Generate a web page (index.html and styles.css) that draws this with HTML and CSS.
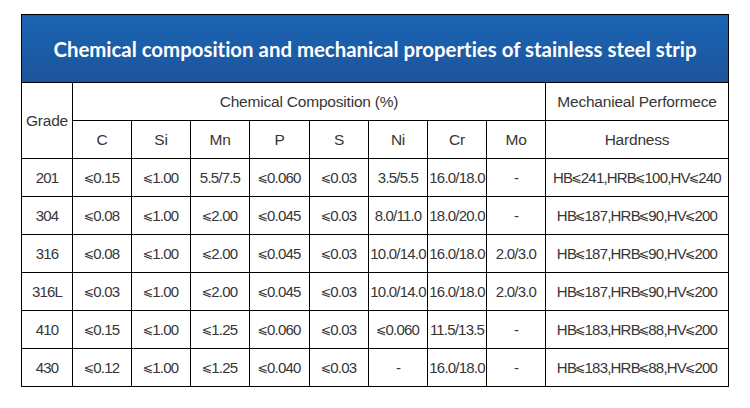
FILE: index.html
```html
<!DOCTYPE html>
<html>
<head>
<meta charset="utf-8">
<link rel="stylesheet" href="styles.css">
</head>
<body>
<div class="wrap">
<table class="spec">
<colgroup>
<col class="c-grade"><col class="c-el"><col class="c-el"><col class="c-el"><col class="c-el6"><col class="c-el"><col class="c-el"><col class="c-el"><col class="c-el"><col class="c-hard">
</colgroup>
<thead>
<tr class="title-row"><th colspan="10" class="title">Chemical composition and mechanical properties of stainless steel strip</th></tr>
<tr><td rowspan="2">Grade</td><td colspan="8">Chemical Composition (%)</td><td>Mechanieal Performece</td></tr>
<tr><td>C</td><td>Si</td><td>Mn</td><td>P</td><td>S</td><td>Ni</td><td>Cr</td><td>Mo</td><td>Hardness</td></tr>
</thead>
<tbody class="num">
<tr><td>201</td><td><span class="le">⩽</span>0.15</td><td><span class="le">⩽</span>1.00</td><td>5.5/7.5</td><td><span class="le">⩽</span>0.060</td><td><span class="le">⩽</span>0.03</td><td>3.5/5.5</td><td>16.0/18.0</td><td>-</td><td>HB<span class="le">⩽</span>241,HRB<span class="le">⩽</span>100,HV<span class="le">⩽</span>240</td></tr>
<tr><td>304</td><td><span class="le">⩽</span>0.08</td><td><span class="le">⩽</span>1.00</td><td><span class="le">⩽</span>2.00</td><td><span class="le">⩽</span>0.045</td><td><span class="le">⩽</span>0.03</td><td>8.0/11.0</td><td>18.0/20.0</td><td>-</td><td>HB<span class="le">⩽</span>187,HRB<span class="le">⩽</span>90,HV<span class="le">⩽</span>200</td></tr>
<tr><td>316</td><td><span class="le">⩽</span>0.08</td><td><span class="le">⩽</span>1.00</td><td><span class="le">⩽</span>2.00</td><td><span class="le">⩽</span>0.045</td><td><span class="le">⩽</span>0.03</td><td>10.0/14.0</td><td>16.0/18.0</td><td>2.0/3.0</td><td>HB<span class="le">⩽</span>187,HRB<span class="le">⩽</span>90,HV<span class="le">⩽</span>200</td></tr>
<tr><td>316L</td><td><span class="le">⩽</span>0.03</td><td><span class="le">⩽</span>1.00</td><td><span class="le">⩽</span>2.00</td><td><span class="le">⩽</span>0.045</td><td><span class="le">⩽</span>0.03</td><td>10.0/14.0</td><td>16.0/18.0</td><td>2.0/3.0</td><td>HB<span class="le">⩽</span>187,HRB<span class="le">⩽</span>90,HV<span class="le">⩽</span>200</td></tr>
<tr><td>410</td><td><span class="le">⩽</span>0.15</td><td><span class="le">⩽</span>1.00</td><td><span class="le">⩽</span>1.25</td><td><span class="le">⩽</span>0.060</td><td><span class="le">⩽</span>0.03</td><td><span class="le">⩽</span>0.060</td><td>11.5/13.5</td><td>-</td><td>HB<span class="le">⩽</span>183,HRB<span class="le">⩽</span>88,HV<span class="le">⩽</span>200</td></tr>
<tr><td>430</td><td><span class="le">⩽</span>0.12</td><td><span class="le">⩽</span>1.00</td><td><span class="le">⩽</span>1.25</td><td><span class="le">⩽</span>0.040</td><td><span class="le">⩽</span>0.03</td><td>-</td><td>16.0/18.0</td><td>-</td><td>HB<span class="le">⩽</span>183,HRB<span class="le">⩽</span>88,HV<span class="le">⩽</span>200</td></tr>
</tbody>
</table>
</div>
</body>
</html>
```

FILE: styles.css
```css
html, body {
  margin: 0;
  padding: 0;
  background: #ffffff;
}
.wrap {
  padding: 14px 0 0 21px;
}
.spec {
  border-collapse: collapse;
  table-layout: fixed;
  width: 708px;
  font-family: "Liberation Sans", Arial, sans-serif;
  font-size: 15.5px;
  color: #363636;
}
.c-grade { width: 51px; }
.c-el { width: 59px; }
.c-el6 { width: 60px; }
.c-hard { width: 183px; }
.spec td, .spec th {
  border: 1px solid #000000;
  padding: 0;
  text-align: center;
  vertical-align: middle;
  white-space: nowrap;
  letter-spacing: -0.2px;
  height: 37px;
}
.spec .num td {
  font-size: 15px;
  letter-spacing: -0.8px;
}
.spec .le {
  font-family: "DejaVu Sans", sans-serif;
  font-size: 12.5px;
  letter-spacing: 0;
  margin: 0 -1px 0 -1px;
  position: relative;
  top: -1px;
}
.spec .title-row th {
  height: 67px;
  background: linear-gradient(180deg, #1a65b3 0%, #1c5ba6 60%, #1d549a 100%);
  color: #ffffff;
  font-family: Lato, "Liberation Sans", sans-serif;
  font-weight: 700;
  font-size: 20.4px;
  letter-spacing: 0;
  font-variant-ligatures: none;
}
```
